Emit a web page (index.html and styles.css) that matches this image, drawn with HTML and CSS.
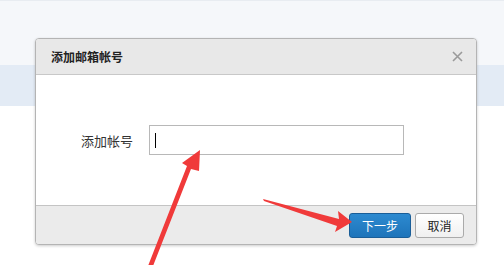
FILE: index.html
```html
<!DOCTYPE html>
<html lang="zh-CN">
<head>
  <meta charset="UTF-8" />
  <title>添加邮箱帐号</title>
  <link rel="stylesheet" href="styles.css">
</head>
<body>

<div class="topbar"></div>
<div class="band"></div>
<div class="page"></div>

<div class="dialog">
  <div class="dialog-head">
    <span class="dialog-title">添加邮箱帐号</span>
    <svg class="dialog-close" width="11" height="11" viewBox="0 0 11 11">
      <path d="M1 1 L10 10 M10 1 L1 10" stroke="#9a9a9a" stroke-width="1.6" fill="none"/>
    </svg>
  </div>
  <div class="dialog-body">
    <label class="field-label">添加帐号</label>
    <div class="field-input"><span class="caret"></span></div>
  </div>
  <div class="dialog-foot">
    <button class="btn btn-primary">下一步</button>
    <button class="btn">取消</button>
  </div>
</div>

<svg class="arrows" width="504" height="265" viewBox="0 0 504 265">
  <polygon fill="#f03a3a" points="148,266 153,266 191,169 199,171 200,150 182,163 187,166"/>
  <polygon fill="#f03a3a" points="263,199 264,201 337,226 335,232 352,222 338,211 339,219"/>
</svg>

</body>
</html>
```

FILE: styles.css
```css
body {
  margin: 0;
  font-family: "Noto Sans CJK SC", "Liberation Sans", sans-serif;
  background: #fff;
  width: 504px;
  height: 265px;
  overflow: hidden;
  position: relative;
}
.topbar {
  height: 64px;
  background: #f5f7fa;
  border-top: 1px solid #e8ecf1;
}
.band {
  height: 41px;
  background: #e3ebf5;
}
.page {
  height: 159px;
  background: #fff;
}
.dialog {
  position: absolute;
  left: 35px;
  top: 38px;
  width: 440px;
  border: 1px solid #b4b4b4;
  border-radius: 4px;
  box-shadow: 0 1px 3px rgba(0,0,0,0.2);
  overflow: hidden;
  background: #fff;
}
.dialog-head {
  height: 35px;
  background: #e8e8e8;
  border-bottom: 1px solid #c8c8c8;
  display: flex;
  align-items: center;
  justify-content: space-between;
  padding: 0 13px 0 15px;
}
.dialog-title {
  font-size: 12px;
  font-weight: bold;
  color: #222;
}
.dialog-body {
  height: 130px;
  display: flex;
  align-items: center;
  padding-left: 45px;
}
.field-label {
  font-size: 13px;
  color: #333;
  width: 68px;
}
.field-input {
  width: 248px;
  height: 28px;
  border: 1px solid #b8b8b8;
  display: flex;
  align-items: center;
  padding-left: 5px;
}
.caret {
  width: 1px;
  height: 15px;
  background: #000;
}
.dialog-foot {
  height: 38px;
  background: #ebebeb;
  border-top: 1px solid #c4c4c4;
  display: flex;
  justify-content: flex-end;
  align-items: center;
  gap: 4px;
  padding-right: 12px;
}
.btn {
  font-family: "Noto Sans CJK SC", "Liberation Sans", sans-serif;
  font-size: 12px;
  height: 25px;
  width: 49px;
  border: 1px solid #aaa;
  border-radius: 3px;
  background: linear-gradient(#fff, #f0f0f0);
  color: #222;
  padding: 0;
}
.btn-primary {
  width: 62px;
  background: linear-gradient(#2d8ad0, #1e74ba);
  border-color: #1a5e98;
  color: #fff;
}
.arrows {
  position: absolute;
  left: 0;
  top: 0;
}
```
